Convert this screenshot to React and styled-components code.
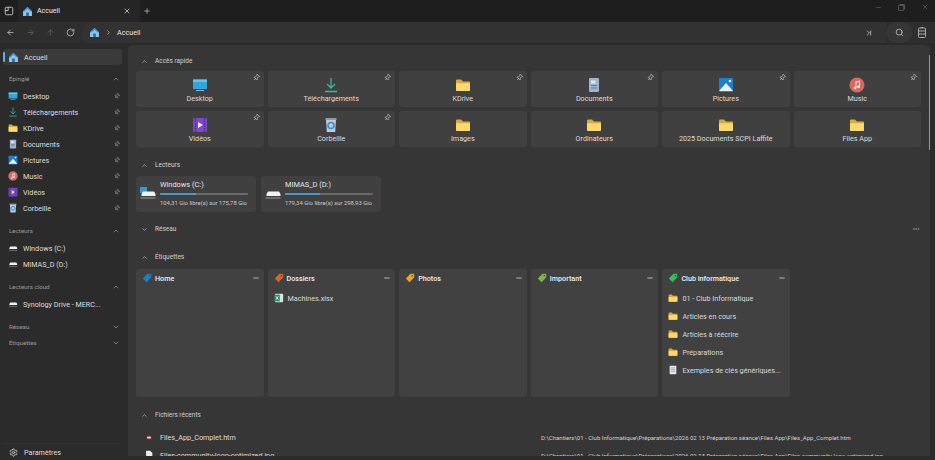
import React from 'react';
import styled, { createGlobalStyle } from 'styled-components';
import { ChevronUp, ChevronDown, Pin, Minus, X, Plus, ArrowLeft, ArrowRight, ArrowUp, RotateCw, Search, Settings, ChevronRight, Ellipsis, ChevronLast } from 'lucide-react';

const Global = createGlobalStyle`
  html, body { margin: 0; padding: 0; background: #1f1f1f; overflow: hidden; }
  * { box-sizing: border-box; }
  #root { width: 935px; height: 460px; }
`;

const Window = styled.div`
  width: 935px; height: 460px; display: flex; flex-direction: column; overflow: hidden;
  background: #2b2b2b; color: #e6e6e6; font-family: Roboto, "Noto Sans", sans-serif; font-size: 7.2px;
`;
const TitleBar = styled.div`
  height: 22px; flex: none; display: flex; align-items: center; background: #1e1e1e; color: #ccc;
`;
const PaneIcon = styled.span`
  width: 18px; display: flex; justify-content: center; color: #ddd;
`;
const Tab = styled.div`
  width: 122px; height: 22px; display: flex; align-items: center; gap: 4px; padding: 0 9px 0 4px; background: #252525; font-size: 7px; color: #ececec;
`;
const TabLabel = styled.span` flex: 1; `;
const NewTab = styled.span` width: 14px; display: flex; justify-content: center; `;
const Spacer = styled.span` flex: 1; `;
const WinControls = styled.div`
  display: flex; align-items: center; gap: 16px; padding: 0 6px 8px 0; color: #666;
`;
const Toolbar = styled.div`
  height: 23px; flex: none; display: flex; align-items: center; padding-right: 3px; background: #2e2e2e; color: #bbb; border-bottom: 2px solid #2a2a2a;
`;
const NavButton = styled.span`
  width: 20px; display: flex; justify-content: center; color: ${p => (p.$off ? '#606060' : '#c4c4c4')};
`;
const Address = styled.div`
  flex: 1; height: 21px; margin-left: 1px; display: flex; align-items: center; gap: 5px; padding: 0 13px 0 8px; background: #323232;
  border-radius: 10px 0 0 10px; font-size: 7.2px; color: #e4e4e4;
`;
const SearchPill = styled.span`
  width: 26px; height: 21px; display: flex; align-items: center; justify-content: center; border-radius: 10px; background: #363636; color: #ccc;
`;
const Body = styled.div` flex: 1; display: flex; min-height: 0; `;
const Sidebar = styled.nav`
  width: 128px; flex: none; display: flex; flex-direction: column; padding: 4px 6px 0 3px; background: #2b2b2b;
`;
const SideItem = styled.div`
  height: 16px; flex: none; display: flex; align-items: center; gap: 5px; padding: 0 2px 0 5px; border-radius: 3px; position: relative;
  background: ${p => (p.$active ? '#3a3a3a' : 'transparent')}; color: #dedede;
  ${p => p.$active && `&::before { content: ""; position: absolute; left: 0; top: 3px; bottom: 3px; width: 1.5px; background: #5cb4e4; border-radius: 1px; }`}
`;
const SideLabel = styled.span` flex: 1; white-space: nowrap; overflow: hidden; `;
const SideGroup = styled.div`
  height: 16px; flex: none; margin-top: ${p => p.$mt || 0}px; margin-bottom: ${p => (p.$open ? 1 : 0)}px; display: flex; align-items: center; justify-content: space-between; padding: 0 2px 0 6px; font-size: 6.2px; color: #9c9c9c;
`;
const Footer = styled.div`
  margin-top: auto; height: 17px; display: flex; align-items: center; gap: 6px; padding: 0 0 0 6px; color: #dedede; border-top: 1px solid #303030;
`;
const Main = styled.main`
  flex: 1; position: relative; overflow: hidden; background: #363636; padding: 7px 9px 0 8px; margin: 0 5px 4px 0; border-radius: 5px 5px 0 0;
`;
const Scrollbar = styled.div`
  position: absolute; right: 0; top: 10px; width: 1.5px; height: 95px; background: #9a9a9a; border-radius: 1px;
`;
const Section = styled.section` margin-top: ${p => p.$mt || 0}px; `;
const Header = styled.div`
  height: 16px; padding-top: 2px; display: flex; align-items: center; gap: 7px; padding-left: 5px; margin-bottom: ${p => p.$mb || 0}px; font-size: 6.5px; color: #d0d0d0;
`;
const HeaderTail = styled.span` margin-left: auto; margin-right: 1px; display: flex; color: #aaa; `;
const TileGrid = styled.div`
  display: grid; grid-template-columns: repeat(6, 1fr); gap: 4px; width: 785px;
`;
const Tile = styled.div`
  position: relative; height: 36px; display: flex; flex-direction: column; align-items: center; padding-top: 6px; background: #404040; border-radius: 3px; color: #dddddd; line-height: 10px;
`;
const TileLabel = styled.span` margin-top: 1px; white-space: nowrap; `;
const TilePin = styled.span` position: absolute; right: 4px; top: 3px; display: flex; color: #d4d4d4; transform: rotate(40deg); `;
const SidePin = styled.span` display: flex; color: #b8b8b8; transform: rotate(40deg); `;
const DriveRow = styled.div` display: flex; gap: 5px; `;
const Drive = styled.div`
  width: 120px; height: 36px; display: flex; align-items: center; gap: 3px; padding: 0 8px 0 3px; background: #404040; border-radius: 3px;
`;
const DriveInfo = styled.div` flex: 1; display: flex; flex-direction: column; min-width: 0; padding-bottom: 1px; `;
const DriveName = styled.span` line-height: 10px; color: #e6e6e6; font-size: 7.4px; `;
const DriveMeta = styled.span` font-size: 5.9px; line-height: 9px; color: #cccccc; white-space: nowrap; `;
const Bar = styled.div` height: 2px; margin: 3px 0 4px; background: #6a6a6a; border-radius: 1px; overflow: hidden; `;
const BarFill = styled.div` height: 100%; background: #4a9ac8; `;
const WidgetGrid = styled.div`
  display: grid; grid-template-columns: repeat(5, 127.6px); gap: 4px;
`;
const Widget = styled.div`
  height: 128px; padding: 0 4px 0 6px; background: #414141; border-radius: 3px;
`;
const WidgetHead = styled.div`
  height: 18px; display: flex; align-items: center; gap: 3px; font-size: 7.2px; font-weight: 500; color: #f0f0f0; margin-bottom: 2px;
`;
const WidgetTitle = styled.span` flex: 1; `;
const WidgetRow = styled.div`
  height: 18px; display: flex; align-items: center; gap: 4px; color: #dadada; white-space: nowrap; overflow: hidden;
`;
const RecentList = styled.div` margin-top: 6px; `;
const Recent = styled.div`
  height: 18px; display: flex; align-items: center; gap: 6px; padding-left: 8px; color: #dedede;
`;
const RecentName = styled.span` width: 375px; flex: none; white-space: nowrap; `;
const RecentPath = styled.span` font-size: 6px; color: #d2d2d2; white-space: nowrap; `;

const Home = ({ s = 12 }) => (
  <svg width={s} height={s} viewBox="0 0 16 16"><path d="M8 1.5 1.5 7.5V14.5H14.5V7.5Z" fill="#8ec5ea" /><path d="M8 1.5 1.5 7.5 3 8.5 8 4l5 4.5 1.5-1Z" fill="#3e8fd0" /><rect x="6" y="9.5" width="4" height="5" fill="#2a6ea8" /></svg>
);
const Folder = ({ s = 12 }) => (
  <svg width={s} height={s} viewBox="0 0 16 16"><path d="M1 3.5A1 1 0 0 1 2 2.5h4l2 2h6a1 1 0 0 1 1 1V13a1 1 0 0 1-1 1H2a1 1 0 0 1-1-1Z" fill="#d8a93c" /><path d="M1 6.3h14V13a1 1 0 0 1-1 1H2a1 1 0 0 1-1-1Z" fill="#fbd96e" /></svg>
);
const DesktopI = ({ s = 12 }) => (
  <svg width={s} height={s} viewBox="0 0 16 16"><path d="M1 2.5h14v9.5H1Z" fill="#31a6dc" /><path d="M1 2.5h14V5H1Z" fill="#5cc6ef" /><path d="M4 13h8v1H4Z" fill="#8ab6cc" /></svg>
);
const DownloadI = ({ s = 12 }) => (
  <svg width={s} height={s} viewBox="0 0 16 16" fill="none" stroke="#3cb5a0" strokeWidth="1.3"><path d="M8 1v9.5M4 7l4 4 4-4M2 14.5h12" /></svg>
);
const DocI = ({ s = 12 }) => (
  <svg width={s} height={s} viewBox="0 0 16 16"><rect x="3" y="1" width="10" height="14" rx="1" fill="#9db6d0" /><rect x="5" y="3.5" width="4.5" height="3" fill="#dfe8f2" /><rect x="5" y="8" width="6" height="1" fill="#5f7f9f" /><rect x="5" y="10.5" width="6" height="1" fill="#5f7f9f" /></svg>
);
const PictureI = ({ s = 12 }) => (
  <svg width={s} height={s} viewBox="0 0 16 16"><rect x="1" y="1" width="14" height="14" rx="1" fill="#1e7fd0" /><path d="M1 14 8 6l7 8Z" fill="#e8f4fb" /><circle cx="12" cy="4" r="1.3" fill="#e8f4fb" /></svg>
);
const MusicI = ({ s = 12 }) => (
  <svg width={s} height={s} viewBox="0 0 16 16"><circle cx="8" cy="8" r="7.5" fill="#d9685f" /><path d="M6.5 4.5 11 3.5v6.2a1.5 1.3 0 1 1-1-1.2V5L7.5 5.6v5.4a1.5 1.3 0 1 1-1-1.2Z" fill="#f6e4e2" /></svg>
);
const VideoI = ({ s = 12 }) => (
  <svg width={s} height={s} viewBox="0 0 16 16"><rect x="1" y="1" width="14" height="14" rx="1" fill="#7a48c8" /><path d="M3.5 1v14M12.5 1v14" stroke="#4c2a90" strokeWidth="1.4" strokeDasharray="1.5 1" /><path d="M6 5l5 3-5 3Z" fill="#efe6ff" /></svg>
);
const BinI = ({ s = 12 }) => (
  <svg width={s} height={s} viewBox="0 0 16 16"><path d="M3 2h10l-.8 13H3.8Z" fill="#c3ccd6" /><rect x="2.5" y="1" width="11" height="2" fill="#8f9aa6" /><circle cx="8" cy="8.5" r="3" fill="none" stroke="#2f8fe0" strokeWidth="1.6" /></svg>
);
const DriveI = ({ s = 18, win }) => (
  <svg width={s} height={s} viewBox="0 0 18 18">
    {win && <rect x="1" y="2" width="7" height="6" fill="#2f9bd8" />}
    <path d="M2.5 9 4 6.5h11L16.5 9v2h-14Z" fill="#f2f2f2" />
    <rect x="1.5" y="12.5" width="15" height="1" fill="#9a9a9a" />
  </svg>
);
const Tag = ({ c }) => (
  <svg width="10" height="10" viewBox="0 0 12 12"><path d="M6.5 1H11v4.5L5.5 11 1 6.5Z" fill={c} /><circle cx="8.8" cy="3.2" r=".9" fill="#414141" /></svg>
);
const Sheet = () => (
  <svg width="10" height="10" viewBox="0 0 12 12"><rect x="1" y="1" width="10" height="10" rx="1" fill="#d6e8dc" /><rect x="1" y="2" width="6" height="8" fill="#2f8f5c" /><path d="M2.5 4l2.5 4M5 4 2.5 8" stroke="#fff" strokeWidth=".9" /></svg>
);
const Note = () => (
  <svg width="10" height="10" viewBox="0 0 12 12"><rect x="2" y="1" width="8" height="10" rx=".8" fill="#e6e6e6" /><path d="M3.5 3.5h5M3.5 5.5h5M3.5 7.5h5" stroke="#888" strokeWidth=".7" /></svg>
);
const Html = () => (
  <svg width="10" height="10" viewBox="0 0 12 12"><circle cx="6" cy="6.5" r="4.2" fill="#5b2a34" /><path d="M3.8 5.5h4.4v2.4H3.8Z" fill="#e6d7da" /></svg>
);
const Img = () => (
  <svg width="10" height="10" viewBox="0 0 12 12"><path d="M2.5 1h5L10 3.5V11H2.5Z" fill="#ececec" /></svg>
);

const quick = [
  ['Desktop', DesktopI, 1], ['Téléchargements', DownloadI, 1], ['KDrive', Folder, 1], ['Documents', DocI, 1], ['Pictures', PictureI, 1], ['Music', MusicI, 1],
  ['Vidéos', VideoI, 1], ['Corbeille', BinI, 1], ['Images', Folder], ['Ordinateurs', Folder], ['2025 Documents SCPI Laffite', Folder], ['Files App', Folder],
];
const pinned = [
  ['Desktop', DesktopI], ['Téléchargements', DownloadI], ['KDrive', Folder], ['Documents', DocI], ['Pictures', PictureI], ['Music', MusicI], ['Vidéos', VideoI], ['Corbeille', BinI],
];
const widgets = [
  { name: 'Home', c: '#1f7fc4', rows: [] },
  { name: 'Dossiers', c: '#d8662a', rows: [[Sheet, 'Machines.xlsx']] },
  { name: 'Photos', c: '#e0a92c', rows: [] },
  { name: 'Important', c: '#7ab648', rows: [] },
  { name: 'Club informatique', c: '#2fc25b', rows: [[Folder, '01 - Club Informatique'], [Folder, 'Articles en cours'], [Folder, 'Articles à réécrire'], [Folder, 'Préparations'], [Note, 'Exemples de clés génériques...']] },
];

const Group = ({ label, mt, open = true }) => (
  <SideGroup $mt={mt} $open={open}>
    <span>{label}</span>
    {open ? <ChevronUp size={8} /> : <ChevronDown size={8} />}
  </SideGroup>
);
const SectionHead = ({ label, mb, open = true, tail }) => (
  <Header $mb={mb}>
    {open ? <ChevronUp size={7} /> : <ChevronDown size={7} />}
    <span>{label}</span>
    {tail && <HeaderTail><Ellipsis size={8} /></HeaderTail>}
  </Header>
);

export default function App() {
  return (
    <Window>
      <Global />
      <TitleBar>
        <PaneIcon>
          <svg width="10" height="10" viewBox="0 0 12 12" fill="none" stroke="#d8d8d8" strokeWidth="1"><rect x="1.5" y="1.5" width="9" height="9" rx="1.5" /><path d="M5 1.5v4H1.5" /></svg>
        </PaneIcon>
        <Tab>
          <Home s={11} />
          <TabLabel>Accueil</TabLabel>
          <X size={8} />
        </Tab>
        <NewTab><Plus size={8} /></NewTab>
        <Spacer />
        <WinControls>
          <Minus size={7} />
          <svg width="7" height="7" viewBox="0 0 8 8" fill="none" stroke="#666"><rect x=".5" y="1.5" width="6" height="6" rx="1" /><path d="M2 .5h4.5a1 1 0 0 1 1 1V6" /></svg>
          <X size={8} />
        </WinControls>
      </TitleBar>
      <Toolbar>
        <NavButton><ArrowLeft size={9} /></NavButton>
        <NavButton $off><ArrowRight size={9} /></NavButton>
        <NavButton $off><ArrowUp size={9} /></NavButton>
        <NavButton><RotateCw size={9} /></NavButton>
        <Address>
          <Home s={11} />
          <ChevronRight size={7} />
          <span>Accueil</span>
          <Spacer />
          <ChevronLast size={8} />
        </Address>
        <SearchPill><Search size={9} /></SearchPill>
        <NavButton>
          <svg width="10" height="11" viewBox="0 0 10 11" fill="none" stroke="#aaa"><rect x="1.5" y="1" width="7" height="9.5" rx="1" /><path d="M1.5 4h7M1.5 7h7M4 1V.5h2V1" /></svg>
        </NavButton>
      </Toolbar>
      <Body>
        <Sidebar>
          <SideItem $active><Home s={11} /><SideLabel>Accueil</SideLabel></SideItem>
          <Group label="Épinglé" mt={6} />
          {pinned.map(([label, Icon]) => (
            <SideItem key={label}><Icon s={10} /><SideLabel>{label}</SideLabel><SidePin><Pin size={6} /></SidePin></SideItem>
          ))}
          <Group label="Lecteurs" mt={7} />
          <SideItem><DriveI s={10} /><SideLabel>Windows (C:)</SideLabel></SideItem>
          <SideItem><DriveI s={10} /><SideLabel>MIMAS_D (D:)</SideLabel></SideItem>
          <Group label="Lecteurs cloud" mt={7} />
          <SideItem><DriveI s={10} /><SideLabel>Synology Drive - MERC...</SideLabel></SideItem>
          <Group label="Réseau" mt={7} open={false} />
          <Group label="Étiquettes" open={false} />
          <Footer><Settings size={9} /><span>Paramètres</span></Footer>
        </Sidebar>
        <Main>
          <Scrollbar />
          <Section>
            <SectionHead label="Accès rapide" mb={3} />
            <TileGrid>
              {quick.map(([label, Icon, pin]) => (
                <Tile key={label}>
                  <Icon s={16} />
                  <TileLabel>{label}</TileLabel>
                  {pin && <TilePin><Pin size={7} /></TilePin>}
                </Tile>
              ))}
            </TileGrid>
          </Section>
          <Section $mt={9}>
            <SectionHead label="Lecteurs" mb={4} />
            <DriveRow>
              <Drive>
                <DriveI win />
                <DriveInfo>
                  <DriveName>Windows (C:)</DriveName>
                  <Bar><BarFill style={{ width: '41%' }} /></Bar>
                  <DriveMeta>104,31 Gio libre(s) sur 175,78 Gio</DriveMeta>
                </DriveInfo>
              </Drive>
              <Drive>
                <DriveI />
                <DriveInfo>
                  <DriveName>MIMAS_D (D:)</DriveName>
                  <Bar><BarFill style={{ width: '40%' }} /></Bar>
                  <DriveMeta>179,34 Gio libre(s) sur 298,93 Gio</DriveMeta>
                </DriveInfo>
              </Drive>
            </DriveRow>
          </Section>
          <Section $mt={8}>
            <SectionHead label="Réseau" open={false} tail />
          </Section>
          <Section $mt={12}>
            <SectionHead label="Étiquettes" mb={5} />
            <WidgetGrid>
              {widgets.map(w => (
                <Widget key={w.name}>
                  <WidgetHead>
                    <Tag c={w.c} />
                    <WidgetTitle>{w.name}</WidgetTitle>
                    <Minus size={8} />
                  </WidgetHead>
                  {w.rows.map(([Icon, label]) => (
                    <WidgetRow key={label}><Icon s={10} /><span>{label}</span></WidgetRow>
                  ))}
                </Widget>
              ))}
            </WidgetGrid>
          </Section>
          <Section $mt={9}>
            <SectionHead label="Fichiers récents" />
            <RecentList>
              <Recent>
                <Html />
                <RecentName>Files_App_Complet.htm</RecentName>
                <RecentPath>D:\Chantiers\01 - Club Informatique\Préparations\2026 02 13 Préparation séance\Files App\Files_App_Complet.htm</RecentPath>
              </Recent>
              <Recent>
                <Img />
                <RecentName>Files-community-logo-optimized.jpg</RecentName>
                <RecentPath>D:\Chantiers\01 - Club Informatique\Préparations\2026 02 13 Préparation séance\Files App\Files-community-logo-optimized.jpg</RecentPath>
              </Recent>
            </RecentList>
          </Section>
        </Main>
      </Body>
    </Window>
  );
}
